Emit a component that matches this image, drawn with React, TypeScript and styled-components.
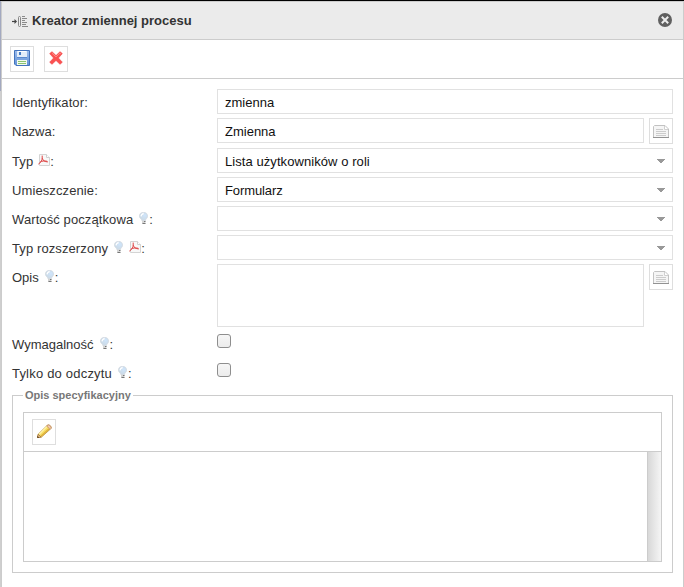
import React from "react";
import styled, { createGlobalStyle } from "styled-components";

const GlobalStyle = createGlobalStyle`
  * { box-sizing: border-box; }
  body { margin: 0; background: #fff; overflow: hidden; }
  button, input, textarea { font: inherit; }
`;

const Screen = styled.div`
  height: 587px;
  width: 684px;
  padding-top: 1px;
  background: #000;
  display: flex;
  font-family: "Liberation Sans", Arial, sans-serif;
  font-size: 13px;
  color: #333;
`;

const Backdrop = styled.div`
  width: 1px;
  background: linear-gradient(#a3a9c0 0 90px, #cfcfcf 90px);
`;

const Dialog = styled.section`
  flex: 1;
  border: solid #ccc;
  border-width: 1px 1px 0;
  background: #fff;
`;

const Header = styled.header`
  height: 38px;
  display: flex;
  align-items: center;
  padding: 0 11px 0 10px;
  background: #ebebeb;
  border-bottom: 1px solid #ccc;
`;

const Title = styled.h1`
  flex: 1;
  margin: 0 0 0 4px;
  font-size: 13px;
  line-height: 16px;
  font-weight: bold;
`;

const CloseButton = styled.button`
  display: flex;
  margin-top: -1px;
  padding: 0;
  border: 0;
  background: none;
`;

const Toolbar = styled.div`
  height: 39px;
  display: flex;
  gap: 10px;
  padding: 6px 8px;
  border-bottom: 1px solid #ccc;
`;

const IconButton = styled.button`
  flex: none;
  width: 24px;
  height: 26px;
  padding: 0 0 2px;
  display: flex;
  align-items: center;
  justify-content: center;
  border: 1px solid #dedede;
  background: #fff;
`;

const NoteButton = styled(IconButton)`
  padding: 1px 0 0;
`;

const Form = styled.form`
  padding: 10px 10px 0;
  display: flex;
  flex-direction: column;
  gap: 4px;
`;

const Row = styled.div`
  display: flex;
  align-items: flex-start;
`;

const Label = styled.label<{ $tracking: number }>`
  width: 205px;
  height: 25px;
  padding-top: 6px;
  line-height: 15px;
  letter-spacing: ${(p) => p.$tracking}px;
  white-space: nowrap;
  display: flex;
`;

const LabelIcon = styled.span<{ $lead: number; $trail: number }>`
  display: flex;
  margin: 0 ${(p) => p.$trail}px 0 ${(p) => p.$lead}px;
`;

const Control = styled.div`
  flex: 1;
  min-width: 0;
  display: flex;
  gap: 5px;
`;

const TextInput = styled.input`
  flex: 1;
  min-width: 0;
  height: 25px;
  padding: 1px 7px 0;
  border: 1px solid #e1e1e1;
  outline: 0;
  color: #111;
  background: #fff;
`;

const TextArea = styled.textarea`
  display: block;
  flex: 1;
  height: 63px;
  border: 1px solid #e1e1e1;
  resize: none;
  outline: 0;
`;

const Combo = styled.div`
  flex: 1;
  height: 25px;
  display: flex;
  align-items: center;
  justify-content: space-between;
  padding: 1px 7px 0;
  border: 1px solid #e1e1e1;
  color: #111;
  line-height: 15px;
`;

const ComboValue = styled.span<{ $tracking?: number }>`
  letter-spacing: ${(p) => p.$tracking ?? 0}px;
`;

const Checkbox = styled.input.attrs({ type: "checkbox" })`
  appearance: none;
  width: 14px;
  height: 14px;
  margin: 3px 0 0;
  border: 1px solid #8e8e8e;
  border-radius: 3px;
  background: linear-gradient(#f6f6f6, #ececec);
`;

const Fieldset = styled.fieldset`
  min-width: 0;
  height: 184px;
  margin: 0;
  padding: 10px;
  border: 1px solid #ccc;
`;

const Legend = styled.legend`
  padding: 0 2px;
  font-size: 11px;
  line-height: 13px;
  font-weight: bold;
  color: #777;
`;

const Editor = styled.div`
  height: 150px;
  border: 1px solid #ccc;
  display: flex;
  flex-direction: column;
`;

const EditorBody = styled.div`
  flex: 1;
  display: flex;
  justify-content: flex-end;
`;

const Gutter = styled.div`
  width: 14px;
  border-left: 1px solid #ccc;
  background: linear-gradient(90deg, #d8d8d8, #f5f5f5);
`;

const VariableIcon = () => (
  <svg width="16" height="14" viewBox="0 0 16 14">
    <path d="M0 7.5h4" stroke="#444" strokeWidth="1.2" />
    <path d="M2.5 5L5 7.5 2.5 10z" fill="#444" />
    <rect x="6.5" y="2.5" width="2" height="10" rx="1" fill="#eee" stroke="#888" />
    <path d="M10 2.5h3M10 4.5h5M10 6.5h3M10 8.5h5M10 10.5h4M10 12.5h6" stroke="#8a8a8a" />
  </svg>
);

const CloseIcon = () => (
  <svg width="14" height="14" viewBox="0 0 14 14">
    <circle cx="7" cy="7" r="7" fill="#606060" />
    <path d="M3.8 3.8l6.4 6.4m0-6.4l-6.4 6.4" stroke="#ededed" strokeWidth="2" />
  </svg>
);

const SaveIcon = () => (
  <svg width="16" height="16" viewBox="0 0 16 16">
    <defs>
      <linearGradient id="disk" x2="0" y2="1">
        <stop stopColor="#9dbcec" />
        <stop offset="1" stopColor="#6293d8" />
      </linearGradient>
    </defs>
    <path d="M.5.5h15v15H2l-1.5-1.5z" fill="url(#disk)" stroke="#4474bd" />
    <path d="M3 1h10v6H3z" fill="#e3edf9" />
    <path d="M4 1h8v1H4z" fill="#fff" />
    <path d="M5 2h2v3H5z" fill="#467bc2" />
    <path d="M3 7h10v1H3z" fill="#5c8bce" />
    <path d="M3 10h10v5H3z" fill="#f4faed" />
    <path d="M4 11h8v1H4zM4 13h8v1H4z" fill="#8bc470" />
  </svg>
);

const DeleteIcon = () => (
  <svg width="14" height="14" viewBox="0 0 14 14">
    <path d="M3 .7L7 4.6 11 .7 13.3 2.6 9.4 7l3.9 4.2L11 13.3 7 9.4 3 13.3.7 11.2 4.6 7 .7 2.6z" fill="#fb5050" stroke="#f04a4c" strokeWidth=".7" strokeLinejoin="round" />
    <path d="M3 2.2L7 5.9l4-3.7.9.7" fill="none" stroke="#ff8b86" />
  </svg>
);

const NoteIcon = () => (
  <svg width="16" height="13" viewBox="0 0 16 13">
    <path d="M1.5.5H12L15.5 4v8.5H.5v-11z" fill="#f5f5f5" stroke="#c2c2c2" />
    <path d="M11.5 1v3.5H15" fill="#fff" stroke="#d0d0d0" />
    <path d="M3 4.5h7M3 6.5h10M3 8.5h10M3 10.5h10" stroke="#ccc" />
    <path d="M0 12.5h16" stroke="#929292" />
  </svg>
);

const PdfIcon = () => (
  <svg width="12" height="12" viewBox="0 0 12 12">
    <path d="M1.5.5h7l3 3v8h-10z" fill="#f8f8f8" stroke="#d4d4d4" />
    <path d="M8.5.5v3h3" fill="#fff" stroke="#d0d0d0" />
    <path d="M4.2 2v2.2c0 2-1.4 4.5-3.5 5.7M4.3 4.5C5 6.8 6.8 7.8 9.5 7.9M2.2 8C4 7 6 6.6 8.8 7.2" fill="none" stroke="#df4545" strokeWidth="1" strokeLinecap="round" />
  </svg>
);

const BulbIcon = () => (
  <svg width="9" height="13" viewBox="0 0 9 13">
    <defs>
      <radialGradient id="glass" cx=".65" cy=".35" r=".7">
        <stop stopColor="#cfe5fb" />
        <stop offset="1" stopColor="#cbd8e3" />
      </radialGradient>
    </defs>
    <path d="M4.5.4A4 4 0 0 1 8.6 4.2C8.6 6.2 6.6 6.8 6.3 8.8H3C2.7 6.8.4 6.2.4 4.2A4 4 0 0 1 4.5.4z" fill="url(#glass)" stroke="#d0d6dc" strokeWidth=".7" />
    <path d="M2 4.4C2.2 2.6 3.2 1.8 4.7 1.6" fill="none" stroke="#fff" strokeWidth="1.2" />
    <path d="M3 8.8h3.4v3H3z" fill="#d4d4d4" />
    <path d="M5 9.5h1.5M3.5 11.5h3" stroke="#777" />
  </svg>
);

const ArrowIcon = () => (
  <svg width="8" height="4" viewBox="0 0 8 4" shapeRendering="crispEdges">
    <path d="M0 0h8v1H7v1H6v1H5v1H3V3H2V2H1V1H0z" fill="#999" />
  </svg>
);

const PencilIcon = () => (
  <svg width="16" height="16" viewBox="-.5 -1 16 16">
    <path d="M1 13.5l.7-3.3L10.7 1.4Q12.2.3 13.8 1.8T14.2 4.8L5 13z" fill="#f9df62" stroke="#b58a32" strokeWidth=".8" />
    <path d="M2.7 10.2l7.8-7.6" stroke="#fff3a8" strokeWidth="1.4" />
    <path d="M4.7 12L12.3 5" stroke="#dcae3c" strokeWidth="1.2" />
    <path d="M10.2 2l1.2-1Q12.5.4 13.8 1.8t.8 2.6l-1 1z" fill="#f1c9ad" stroke="#b98359" strokeWidth=".7" />
    <path d="M1.7 10.4L4.7 13l-3.6.6z" fill="#efd0a2" stroke="#9b6529" strokeWidth=".7" />
    <path d="M1 12L2.8 13.8H.8z" fill="#493016" />
  </svg>
);

type Hint = "bulb" | "pdf";

type FieldLabelProps = { text: string; hints?: Hint[]; tracking?: number };

const FieldLabel = ({ text, hints = [], tracking = 0.1 }: FieldLabelProps) => (
  <Label $tracking={tracking}>
    {text}
    {hints.map((hint, i) =>
      hint === "bulb" ? (
        <LabelIcon key={hint} $lead={6} $trail={i < hints.length - 1 ? 3 : 1}><BulbIcon /></LabelIcon>
      ) : (
        <LabelIcon key={hint} $lead={i ? 3 : 5} $trail={0}><PdfIcon /></LabelIcon>
      )
    )}
    :
  </Label>
);

const selects: { text: string; value: string; tracking?: number; hints?: Hint[] }[] = [
  { text: "Typ", value: "Lista użytkowników o roli", tracking: 0.07, hints: ["pdf"] },
  { text: "Umieszczenie", value: "Formularz", tracking: -0.1 },
  { text: "Wartość początkowa", value: "", hints: ["bulb"] },
  { text: "Typ rozszerzony", value: "", hints: ["bulb", "pdf"] },
];

export default function App() {
  return (
    <>
      <GlobalStyle />
      <Screen>
        <Backdrop />
        <Dialog>
          <Header>
            <VariableIcon />
            <Title>Kreator zmiennej procesu</Title>
            <CloseButton><CloseIcon /></CloseButton>
          </Header>
          <Toolbar>
            <IconButton><SaveIcon /></IconButton>
            <IconButton><DeleteIcon /></IconButton>
          </Toolbar>
          <Form>
            <Row>
              <FieldLabel text="Identyfikator" />
              <Control><TextInput defaultValue="zmienna" /></Control>
            </Row>
            <Row>
              <FieldLabel text="Nazwa" tracking={0} />
              <Control>
                <TextInput defaultValue="Zmienna" />
                <NoteButton type="button"><NoteIcon /></NoteButton>
              </Control>
            </Row>
            {selects.map((s) => (
              <Row key={s.text}>
                <FieldLabel text={s.text} hints={s.hints} />
                <Control>
                  <Combo>
                    <ComboValue $tracking={s.tracking}>{s.value}</ComboValue>
                    <ArrowIcon />
                  </Combo>
                </Control>
              </Row>
            ))}
            <Row>
              <FieldLabel text="Opis" hints={["bulb"]} tracking={0} />
              <Control>
                <TextArea />
                <NoteButton type="button"><NoteIcon /></NoteButton>
              </Control>
            </Row>
            <Row>
              <FieldLabel text="Wymagalność" hints={["bulb"]} tracking={0} />
              <Checkbox />
            </Row>
            <Row>
              <FieldLabel text="Tylko do odczytu" hints={["bulb"]} tracking={0.2} />
              <Checkbox />
            </Row>
            <Fieldset>
              <Legend>Opis specyfikacyjny</Legend>
              <Editor>
                <Toolbar><IconButton type="button"><PencilIcon /></IconButton></Toolbar>
                <EditorBody><Gutter /></EditorBody>
              </Editor>
            </Fieldset>
          </Form>
        </Dialog>
      </Screen>
    </>
  );
}
